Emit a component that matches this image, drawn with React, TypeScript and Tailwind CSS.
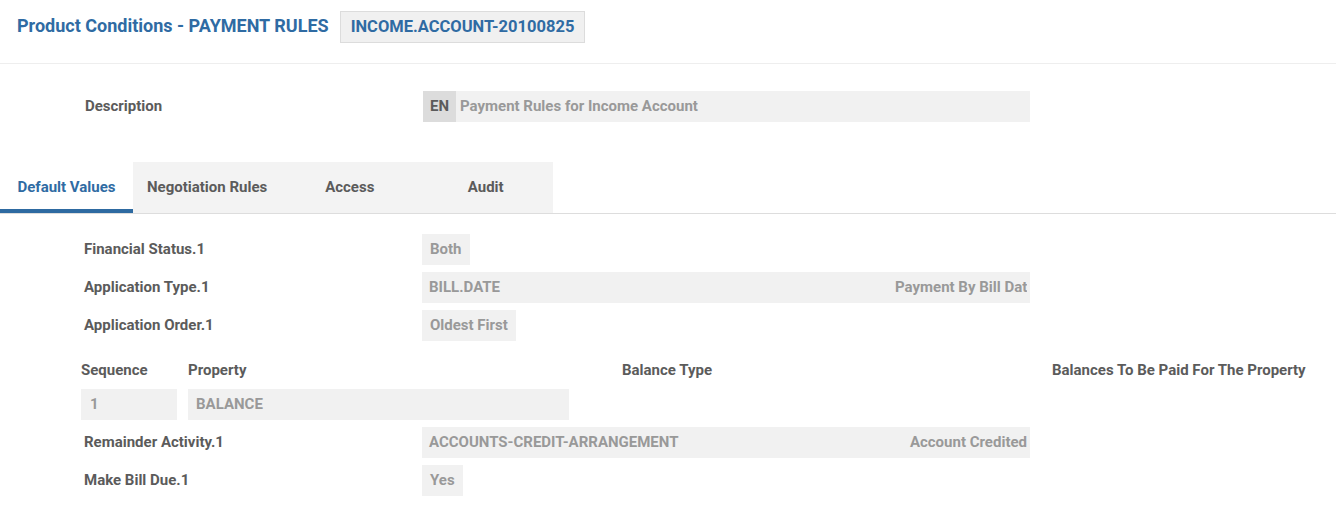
import React from 'react'

const font = { fontFamily: 'Roboto, "Liberation Sans", sans-serif' }

function Box({ children, className = '' }: { children: React.ReactNode; className?: string }) {
  return (
    <div className={`h-[31px] flex items-center bg-[#f1f1f1] text-[#999] text-[15px] font-bold ${className}`}>
      {children}
    </div>
  )
}

function Row({ label, children }: { label: string; children: React.ReactNode }) {
  return (
    <div className="flex items-center">
      <div className="w-[422px] pl-[84px] text-[15px] font-bold text-[#5b5b5b]">{label}</div>
      {children}
    </div>
  )
}

// right-hand description is clipped on purpose, as in the screen
function Wide({ left, right }: { left: string; right: string }) {
  return (
    <Box className="w-[608px] justify-between pl-[7px] pr-[3px]">
      <span>{left}</span>
      <span className="w-[132px] text-right overflow-hidden whitespace-nowrap">{right}</span>
    </Box>
  )
}

export default function App() {
  const tabs = [
    { label: 'Negotiation Rules', cls: 'px-[14px]' },
    { label: 'Access', cls: 'w-[137px] justify-center' },
    { label: 'Audit', cls: 'w-[135px] justify-center' },
  ]

  return (
    <div className="w-[1336px] h-[511px] bg-white overflow-hidden" style={font}>
      <header className="flex items-start gap-[11px] px-[17px] pt-[11px] pb-[20px] border-b border-[#eee]">
        <h1 className="h-[29px] flex items-center text-[18px] font-bold text-[#2f6ba3]">Product Conditions - PAYMENT RULES</h1>
        <div className="h-[32px] px-[10px] flex items-center bg-[#f0f0f0] border border-[#dcdcdc] text-[16.5px] font-bold text-[#2f6ba3]">
          INCOME.ACCOUNT-20100825
        </div>
      </header>

      <div className="flex items-center mt-[27px]">
        <div className="w-[423px] pl-[85px] text-[15px] font-bold text-[#5b5b5b]">Description</div>
        <div className="w-[607px] h-[31px] flex bg-[#f1f1f1] text-[15px] font-bold">
          <span className="w-[33px] flex items-center justify-center bg-[#dcdcdc] text-[#5b5b5b]">EN</span>
          <span className="flex items-center pl-[4px] text-[#999]">Payment Rules for Income Account</span>
        </div>
      </div>

      <nav className="mt-[40px] flex border-b border-[#ddd] text-[15px] font-bold">
        <div className="w-[133px] h-[51px] flex items-center justify-center border-b-4 border-[#2e6aa1] pt-[4px] text-[#2f6ba3]">
          Default Values
        </div>
        {tabs.map(t => (
          <div key={t.label} className={`h-[51px] flex items-center bg-[#f3f3f3] text-[#5b5b5b] ${t.cls}`}>
            {t.label}
          </div>
        ))}
      </nav>

      <div className="mt-[20px] flex flex-col gap-[7px]">
        <Row label="Financial Status.1">
          <Box className="px-[8px]">Both</Box>
        </Row>
        <Row label="Application Type.1">
          <Wide left="BILL.DATE" right="Payment By Bill Date" />
        </Row>
        <Row label="Application Order.1">
          <Box className="px-[8px]">Oldest First</Box>
        </Row>

        <div className="pl-[81px] pt-[3px]">
          <div className="flex items-center h-[38px] text-[15px] font-bold text-[#5b5b5b]">
            <span className="w-[107px]">Sequence</span>
            <span className="w-[381px]">Property</span>
            <span className="w-[196px] text-center">Balance Type</span>
            <span className="ml-[287px]">Balances To Be Paid For The Property</span>
          </div>
          <div className="flex gap-[11px]">
            <Box className="w-[96px] pl-[9px]">1</Box>
            <Box className="w-[381px] pl-[8px]">BALANCE</Box>
          </div>
        </div>

        <Row label="Remainder Activity.1">
          <Wide left="ACCOUNTS-CREDIT-ARRANGEMENT" right="Account Credited" />
        </Row>
        <Row label="Make Bill Due.1">
          <Box className="px-[8px]">Yes</Box>
        </Row>
      </div>
    </div>
  )
}
